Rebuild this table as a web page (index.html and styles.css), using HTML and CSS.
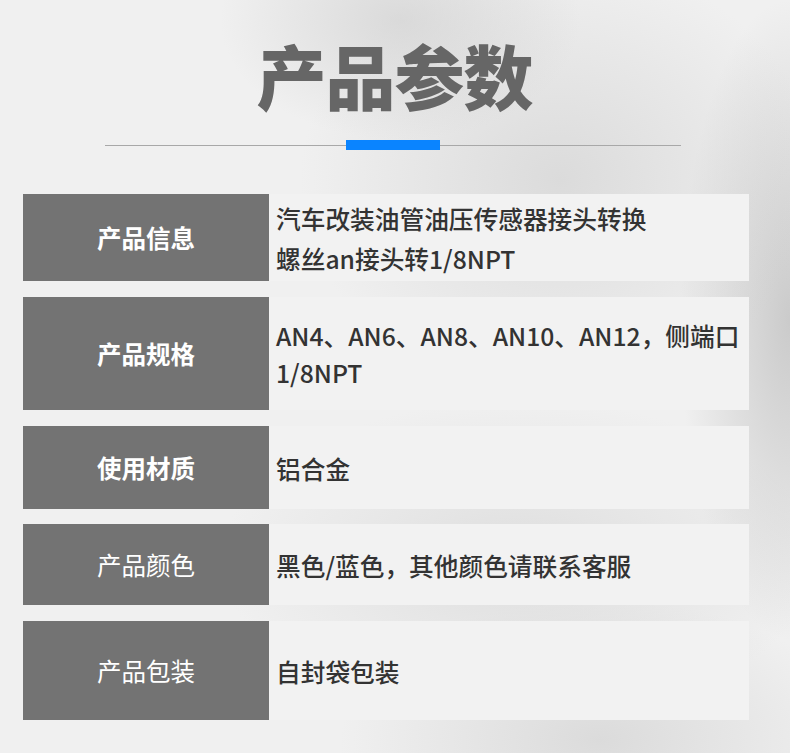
FILE: index.html
```html
<!DOCTYPE html>
<html lang="zh">
<head>
<meta charset="utf-8">
<link rel="stylesheet" href="styles.css">
</head>
<body>
<div class="page">
  <h1 class="title">产品参数</h1>
  <div class="divider">
    <span class="line"></span>
    <span class="bar"></span>
    <span class="line"></span>
  </div>
  <div class="table">
    <div class="row r1">
      <div class="label bold">产品信息</div>
      <div class="value">汽车改装油管油压传感器接头转换<br>螺丝an接头转1/8NPT</div>
    </div>
    <div class="row r2">
      <div class="label bold">产品规格</div>
      <div class="value">AN4、AN6、AN8、AN10、AN12，侧端口<br>1/8NPT</div>
    </div>
    <div class="row r3">
      <div class="label bold">使用材质</div>
      <div class="value">铝合金</div>
    </div>
    <div class="row r4">
      <div class="label">产品颜色</div>
      <div class="value">黑色/蓝色，其他颜色请联系客服</div>
    </div>
    <div class="row r5">
      <div class="label">产品包装</div>
      <div class="value">自封袋包装</div>
    </div>
  </div>
</div>
</body>
</html>
```

FILE: styles.css
```css
html, body {
  margin: 0;
  padding: 0;
}
body {
  width: 790px;
  height: 753px;
  overflow: hidden;
  font-family: "Noto Sans CJK SC", "Noto Sans", sans-serif;
}
.page {
  width: 790px;
  height: 753px;
  box-sizing: border-box;
  padding-top: 37px;
  background:
    radial-gradient(ellipse 180px 120px at 400px 20px, rgba(200,200,200,0.55), rgba(200,200,200,0) 100%),
    radial-gradient(ellipse 260px 220px at 560px 180px, rgba(205,205,205,0.6), rgba(205,205,205,0) 100%),
    radial-gradient(ellipse 110px 320px at 790px 320px, rgba(190,190,190,0.75), rgba(190,190,190,0) 100%),
    radial-gradient(ellipse 300px 160px at 520px 560px, rgba(210,210,210,0.6), rgba(210,210,210,0) 100%),
    radial-gradient(ellipse 260px 140px at 600px 740px, rgba(205,205,205,0.6), rgba(205,205,205,0) 100%),
    #f0f0f0;
}
.title {
  margin: 0;
  text-align: center;
  font-size: 70px;
  line-height: 76px;
  font-weight: 900;
  color: #666666;
  letter-spacing: -1px;
  padding-right: 1px;
}
.divider {
  display: flex;
  align-items: center;
  width: 576px;
  margin: 27px 0 0 105px;
  height: 10px;
}
.line {
  flex: 1;
  height: 1px;
  background: #a8a8a8;
}
.bar {
  width: 94px;
  height: 10px;
  background: #0a84ff;
}
.table {
  margin: 44px 0 0 23px;
  width: 726px;
  display: flex;
  flex-direction: column;
  gap: 15px;
}
.row {
  display: flex;
}
.r1 { height: 87px; }
.r2 { height: 113px; margin-top: 1px; }
.r3 { height: 83px; margin-top: 1px; }
.r4 { height: 81px; }
.r5 { height: 99px; margin-top: 1px; }
.label {
  width: 246px;
  flex: none;
  background: #737373;
  color: #ffffff;
  font-size: 24.5px;
  display: flex;
  align-items: center;
  justify-content: center;
  font-weight: 400;
}
.label.bold {
  font-weight: 700;
}
.value {
  flex: 1;
  background: #f2f2f2;
  color: #333333;
  font-size: 24.7px;
  font-weight: 500;
  line-height: 38px;
  padding-left: 7px;
  display: flex;
  flex-direction: column;
  justify-content: center;
}
.r1 .value {
  line-height: 40px;
}
.r2 .value {
  line-height: 37px;
}
```
